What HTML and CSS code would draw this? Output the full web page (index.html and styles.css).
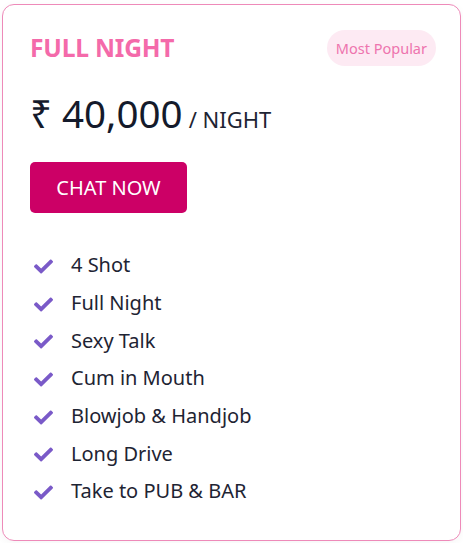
FILE: index.html
```html
<!DOCTYPE html>
<html lang="en">
<head>
<meta charset="utf-8">
<title>Full Night</title>
<link rel="stylesheet" href="styles.css">
</head>
<body>
<div class="page">
  <div class="card">
    <div class="head">
      <h2 class="title">FULL NIGHT</h2>
      <span class="badge">Most Popular</span>
    </div>
    <div class="price"><span class="amount">₹ 40,000</span> <span class="per">/ NIGHT</span></div>
    <a class="btn" href="#">CHAT NOW</a>
    <ul class="features">
      <li><svg class="check" viewBox="0 0 512 512"><path d="M173.898 439.404l-166.4-166.4c-9.997-9.997-9.997-26.206 0-36.204l36.203-36.204c9.997-9.998 26.207-9.998 36.204 0L192 312.69 432.095 72.596c9.997-9.997 26.207-9.997 36.204 0l36.203 36.204c9.997 9.997 9.997 26.206 0 36.204l-294.4 294.401c-9.998 9.997-26.207 9.997-36.204-.001z"/></svg><span>4 Shot</span></li>
      <li><svg class="check" viewBox="0 0 512 512"><path d="M173.898 439.404l-166.4-166.4c-9.997-9.997-9.997-26.206 0-36.204l36.203-36.204c9.997-9.998 26.207-9.998 36.204 0L192 312.69 432.095 72.596c9.997-9.997 26.207-9.997 36.204 0l36.203 36.204c9.997 9.997 9.997 26.206 0 36.204l-294.4 294.401c-9.998 9.997-26.207 9.997-36.204-.001z"/></svg><span>Full Night</span></li>
      <li><svg class="check" viewBox="0 0 512 512"><path d="M173.898 439.404l-166.4-166.4c-9.997-9.997-9.997-26.206 0-36.204l36.203-36.204c9.997-9.998 26.207-9.998 36.204 0L192 312.69 432.095 72.596c9.997-9.997 26.207-9.997 36.204 0l36.203 36.204c9.997 9.997 9.997 26.206 0 36.204l-294.4 294.401c-9.998 9.997-26.207 9.997-36.204-.001z"/></svg><span>Sexy Talk</span></li>
      <li><svg class="check" viewBox="0 0 512 512"><path d="M173.898 439.404l-166.4-166.4c-9.997-9.997-9.997-26.206 0-36.204l36.203-36.204c9.997-9.998 26.207-9.998 36.204 0L192 312.69 432.095 72.596c9.997-9.997 26.207-9.997 36.204 0l36.203 36.204c9.997 9.997 9.997 26.206 0 36.204l-294.4 294.401c-9.998 9.997-26.207 9.997-36.204-.001z"/></svg><span>Cum in Mouth</span></li>
      <li><svg class="check" viewBox="0 0 512 512"><path d="M173.898 439.404l-166.4-166.4c-9.997-9.997-9.997-26.206 0-36.204l36.203-36.204c9.997-9.998 26.207-9.998 36.204 0L192 312.69 432.095 72.596c9.997-9.997 26.207-9.997 36.204 0l36.203 36.204c9.997 9.997 9.997 26.206 0 36.204l-294.4 294.401c-9.998 9.997-26.207 9.997-36.204-.001z"/></svg><span>Blowjob &amp; Handjob</span></li>
      <li><svg class="check" viewBox="0 0 512 512"><path d="M173.898 439.404l-166.4-166.4c-9.997-9.997-9.997-26.206 0-36.204l36.203-36.204c9.997-9.998 26.207-9.998 36.204 0L192 312.69 432.095 72.596c9.997-9.997 26.207-9.997 36.204 0l36.203 36.204c9.997 9.997 9.997 26.206 0 36.204l-294.4 294.401c-9.998 9.997-26.207 9.997-36.204-.001z"/></svg><span>Long Drive</span></li>
      <li><svg class="check" viewBox="0 0 512 512"><path d="M173.898 439.404l-166.4-166.4c-9.997-9.997-9.997-26.206 0-36.204l36.203-36.204c9.997-9.998 26.207-9.998 36.204 0L192 312.69 432.095 72.596c9.997-9.997 26.207-9.997 36.204 0l36.203 36.204c9.997 9.997 9.997 26.206 0 36.204l-294.4 294.401c-9.998 9.997-26.207 9.997-36.204-.001z"/></svg><span>Take to PUB &amp; BAR</span></li>
    </ul>
  </div>
</div>
</body>
</html>
```

FILE: styles.css
```css
* { box-sizing: border-box; }
html, body { margin: 0; padding: 0; background: #ffffff; }
body { font-family: "Noto Sans", "Open Sans", sans-serif; color: #1a2030; }
.page { padding: 4px 2px 2px 2px; }
.card {
  width: 459px;
  height: 537px;
  border: 1px solid #ee8ab9;
  border-radius: 12px;
  padding: 25px 27px 20px 27px;
  background: #fff;
  box-shadow: 0 2px 8px rgba(0,0,0,0.04);
}
.head { display: flex; justify-content: space-between; align-items: center; }
.title { margin: 0; font-size: 24.6px; font-weight: 700; color: #f46aaa; line-height: 36px; letter-spacing: -0.2px; }
.badge {
  background: #fdeaf3;
  color: #ee74ae;
  font-size: 14.5px;
  height: 36px;
  line-height: 36px;
  padding: 0 9px;
  border-radius: 18px;
  margin-right: -3px;
}
.price { margin-top: 25px; line-height: 44px; }
.amount { font-size: 38.5px; color: #141a2b; }
.per { font-size: 22px; color: #1e2433; margin-left: 2px; }
.btn {
  display: inline-block;
  margin-top: 18px;
  width: 157px;
  height: 51px;
  line-height: 51px;
  text-align: center;
  background: #cc0066;
  color: #fff;
  font-size: 20px;
  text-decoration: none;
  border-radius: 5px;
}
.features { list-style: none; margin: 33px 0 0 0; padding: 0 0 0 4px; }
.features li { display: flex; align-items: center; height: 37.7px; font-size: 20px; color: #1e2433; }
.check { width: 19px; height: 19px; fill: #7a5ac8; margin-right: 18px; margin-top: 3px; flex: none; }
```
